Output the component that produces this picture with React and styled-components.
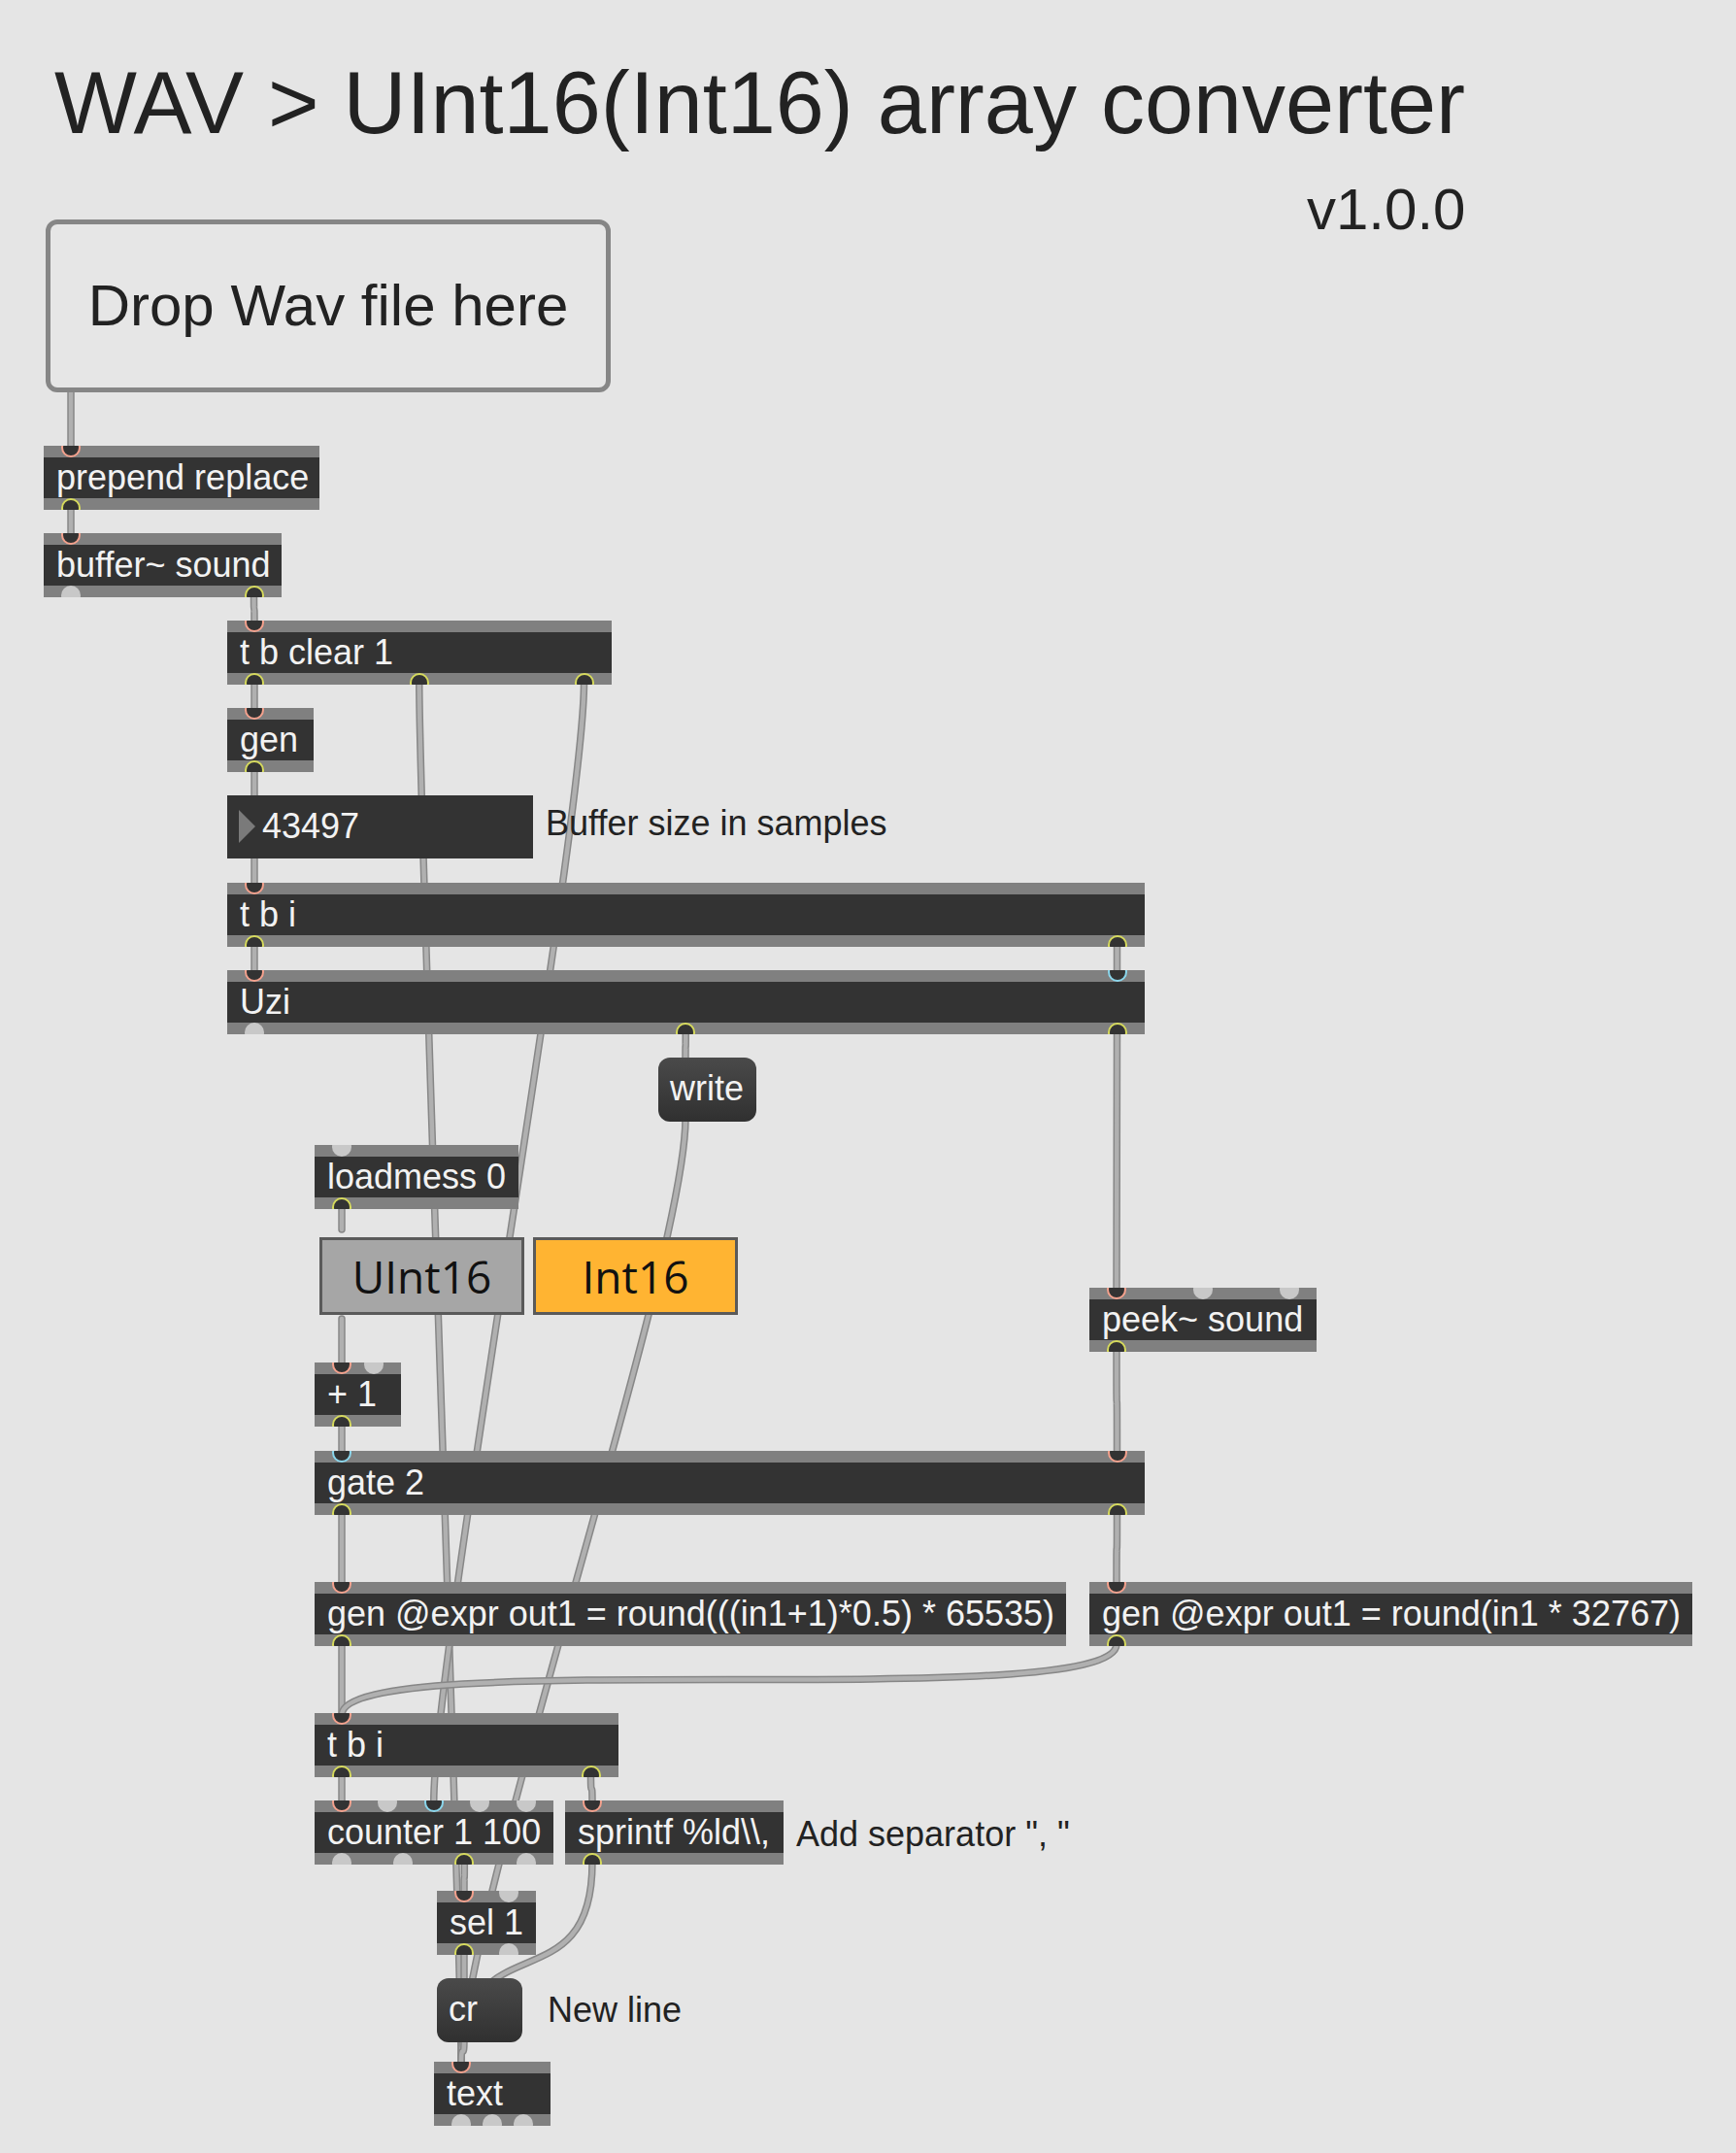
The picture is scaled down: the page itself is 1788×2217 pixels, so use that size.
import React from 'react'
import styled, { createGlobalStyle } from 'styled-components'

const GlobalStyle = createGlobalStyle`
  html, body {
    margin: 0;
    padding: 0;
    background: #e5e5e5;
  }
`

const RING = { hot: '#f4a18d', cold: '#8ad6ec', out: '#d6da5c' }

const portX = (w, n, i) => (n === 1 ? 28 : 28 + (i * (w - 56.5)) / (n - 1))

const objects = [
  { id: 'prepend', x: 45, y: 459, w: 284, text: 'prepend replace', ins: ['hot'], outs: ['out'] },
  { id: 'buffer', x: 45, y: 549, w: 245, text: 'buffer~ sound', ins: ['hot'], outs: ['none', 'out'] },
  { id: 'tbclear', x: 234, y: 639, w: 396, text: 't b clear 1', ins: ['hot'], outs: ['out', 'out', 'out'] },
  { id: 'gen', x: 234, y: 729, w: 89, text: 'gen', ins: ['hot'], outs: ['out'] },
  { id: 'tbi', x: 234, y: 909, w: 945, text: 't b i', ins: ['hot'], outs: ['out', 'out'] },
  { id: 'uzi', x: 234, y: 999, w: 945, text: 'Uzi', ins: ['hot', 'cold'], outs: ['none', 'out', 'out'] },
  { id: 'loadmess', x: 324, y: 1179, w: 210, text: 'loadmess 0', ins: ['none'], outs: ['out'] },
  { id: 'peek', x: 1122, y: 1326, w: 234, text: 'peek~ sound', ins: ['hot', 'none', 'none'], outs: ['out'] },
  { id: 'plus', x: 324, y: 1403, w: 89, text: '+ 1', ins: ['hot', 'none'], outs: ['out'] },
  { id: 'gate', x: 324, y: 1494, w: 855, text: 'gate 2', ins: ['cold', 'hot'], outs: ['out', 'out'] },
  { id: 'gen1', x: 324, y: 1629, w: 774, text: 'gen @expr out1 = round(((in1+1)*0.5) * 65535)', ins: ['hot'], outs: ['out'] },
  { id: 'gen2', x: 1122, y: 1629, w: 621, text: 'gen @expr out1 = round(in1 * 32767)', ins: ['hot'], outs: ['out'] },
  { id: 'tbi2', x: 324, y: 1764, w: 313, text: 't b i', ins: ['hot'], outs: ['out', 'out'] },
  { id: 'counter', x: 324, y: 1854, w: 246, text: 'counter 1 100', ins: ['hot', 'none', 'cold', 'none', 'none'], outs: ['none', 'none', 'out', 'none'] },
  { id: 'sprintf', x: 582, y: 1854, w: 225, text: 'sprintf %ld\\\\,', ins: ['hot'], outs: ['out'] },
  { id: 'sel', x: 450, y: 1947, w: 102, text: 'sel 1', ins: ['hot', 'none'], outs: ['out', 'none'] },
  { id: 'text', x: 447, y: 2123, w: 120, text: 'text', ins: ['hot'], outs: ['none', 'none', 'none'] },
]

const byId = Object.fromEntries(objects.map((o) => [o.id, o]))
const outlet = (id, i) => {
  const o = byId[id]
  return [o.x + portX(o.w, o.outs.length, i), o.y + 64]
}
const inlet = (id, i) => {
  const o = byId[id]
  return [o.x + portX(o.w, o.ins.length, i), o.y + 2]
}

const cords = [
  [[73, 404], inlet('prepend', 0)],
  [outlet('prepend', 0), inlet('buffer', 0)],
  [outlet('buffer', 1), inlet('tbclear', 0)],
  [outlet('tbclear', 0), inlet('gen', 0)],
  [outlet('tbclear', 1), inlet('text', 0)],
  [outlet('tbclear', 2), inlet('counter', 2)],
  [outlet('gen', 0), [262, 822]],
  [[262, 882], inlet('tbi', 0)],
  [outlet('tbi', 0), inlet('uzi', 0)],
  [outlet('tbi', 1), inlet('uzi', 1)],
  [outlet('uzi', 1), [706, 1092]],
  [outlet('uzi', 2), inlet('peek', 0)],
  [[706, 1152], inlet('text', 0)],
  [outlet('loadmess', 0), [352, 1266]],
  [[352, 1358], inlet('plus', 0)],
  [outlet('plus', 0), inlet('gate', 0)],
  [outlet('peek', 0), inlet('gate', 1)],
  [outlet('gate', 0), inlet('gen1', 0)],
  [outlet('gate', 1), inlet('gen2', 0)],
  [outlet('gen1', 0), inlet('tbi2', 0)],
  [outlet('gen2', 0), inlet('tbi2', 0)],
  [outlet('tbi2', 0), inlet('counter', 0)],
  [outlet('tbi2', 1), inlet('sprintf', 0)],
  [outlet('counter', 2), inlet('sel', 0)],
  [outlet('sel', 0), [478, 2040]],
  [outlet('sprintf', 0), inlet('text', 0)],
  [[478, 2100], inlet('text', 0)],
]

const cordPath = ([x1, y1], [x2, y2]) => {
  const k = Math.min(Math.abs(y2 - y1), 150)
  return `M ${x1} ${y1} C ${x1} ${y1 + k}, ${x2} ${y2 - k}, ${x2} ${y2}`
}

function Patcher() {
  return (
    <Canvas>
      <CordLayer width="1788" height="2217" viewBox="0 0 1788 2217">
        {cords.map(([a, b], i) => (
          <g key={i} fill="none" strokeLinecap="round">
            <path d={cordPath(a, b)} stroke="#878787" strokeWidth="7.5" />
            <path d={cordPath(a, b)} stroke="#b0b0b0" strokeWidth="4.5" />
          </g>
        ))}
      </CordLayer>

      <Title>WAV &gt; UInt16(Int16) array converter</Title>
      <Version>v1.0.0</Version>

      <DropZone>Drop Wav file here</DropZone>

      {objects.map((o) => (
        <ObjBox key={o.id} $x={o.x} $y={o.y} $w={o.w}>
          <Bar />
          <Body>{o.text}</Body>
          <Bar />
          {o.ins.map((k, i) => (
            <Port key={'i' + i} $top $kind={k} $x={portX(o.w, o.ins.length, i)} />
          ))}
          {o.outs.map((k, i) => (
            <Port key={'o' + i} $kind={k} $x={portX(o.w, o.outs.length, i)} />
          ))}
        </ObjBox>
      ))}

      <NumberBox>
        <Arrow />
        43497
      </NumberBox>
      <Comment $x={562} $y={830}>Buffer size in samples</Comment>

      <Message $x={678} $y={1089} $w={101}>write</Message>
      <Message $x={450} $y={2037} $w={88}>cr</Message>

      <Tab $x={329} $bg="#a6a6a6">UInt16</Tab>
      <Tab $x={549} $bg="#ffb432">Int16</Tab>

      <Comment $x={820} $y={1871}>Add separator ", "</Comment>
      <Comment $x={564} $y={2052}>New line</Comment>
    </Canvas>
  )
}

export default function App() {
  return (
    <>
      <GlobalStyle />
      <Patcher />
    </>
  )
}

const Canvas = styled.div`
  position: relative;
  width: 1788px;
  height: 2217px;
  overflow: hidden;
  background: #e5e5e5;
  font-family: "Liberation Sans", Arial, sans-serif;
`

const CordLayer = styled.svg`
  position: absolute;
  left: 0;
  top: 0;
`

const Title = styled.div`
  position: absolute;
  left: 56px;
  top: 61px;
  font-size: 90px;
  line-height: 90px;
  color: #222;
  white-space: nowrap;
`

const Version = styled.div`
  position: absolute;
  left: 1346px;
  top: 186px;
  font-size: 60px;
  line-height: 60px;
  color: #222;
`

const DropZone = styled.div`
  position: absolute;
  left: 47px;
  top: 226px;
  width: 582px;
  height: 178px;
  box-sizing: border-box;
  border: 5px solid #868686;
  border-radius: 12px;
  background: #e6e6e6;
  display: flex;
  align-items: center;
  justify-content: center;
  font-size: 60px;
  line-height: 60px;
  color: #222;
`

const ObjBox = styled.div`
  position: absolute;
  left: ${(p) => p.$x}px;
  top: ${(p) => p.$y}px;
  width: ${(p) => p.$w}px;
  height: 66px;
  overflow: hidden;
  display: flex;
  flex-direction: column;
`

const Bar = styled.div`
  flex: none;
  height: 12px;
  background: #808080;
`

const Body = styled.div`
  flex: 1;
  background: #333333;
  color: #f2f2f2;
  font-size: 36px;
  line-height: 41px;
  padding-left: 13px;
  white-space: nowrap;
`

const Port = styled.span`
  position: absolute;
  left: ${(p) => p.$x - 10}px;
  ${(p) => (p.$top ? 'top: -8px;' : 'bottom: -8px;')}
  width: 20px;
  height: 20px;
  box-sizing: border-box;
  border-radius: 50%;
  background: ${(p) => (p.$kind === 'none' ? '#c8c8c8' : '#333333')};
  border: ${(p) => (p.$kind === 'none' ? 'none' : `2.5px solid ${RING[p.$kind]}`)};
`

const NumberBox = styled.div`
  position: absolute;
  left: 234px;
  top: 819px;
  width: 315px;
  height: 65px;
  background: #333333;
  color: #f2f2f2;
  font-size: 36px;
  line-height: 63px;
  padding-left: 36px;
  box-sizing: border-box;
`

const Arrow = styled.span`
  position: absolute;
  left: 12px;
  top: 15px;
  width: 0;
  height: 0;
  border-top: 17.5px solid transparent;
  border-bottom: 17.5px solid transparent;
  border-left: 17px solid #7a7a7a;
`

const Message = styled.div`
  position: absolute;
  left: ${(p) => p.$x}px;
  top: ${(p) => p.$y}px;
  width: ${(p) => p.$w}px;
  height: 66px;
  box-sizing: border-box;
  padding-left: 12px;
  border-radius: 12px;
  background: linear-gradient(#4a4a4a, #303030);
  color: #f2f2f2;
  font-size: 36px;
  line-height: 64px;
`

const Tab = styled.div`
  position: absolute;
  left: ${(p) => p.$x}px;
  top: 1274px;
  width: 211px;
  height: 80px;
  box-sizing: border-box;
  border: 3px solid #5a5a5a;
  background: ${(p) => p.$bg};
  display: flex;
  align-items: center;
  justify-content: center;
  font-family: "Open Sans", sans-serif;
  font-size: 46px;
  line-height: 74px;
  color: #111;
`

const Comment = styled.div`
  position: absolute;
  left: ${(p) => p.$x}px;
  top: ${(p) => p.$y}px;
  font-size: 36px;
  line-height: 36px;
  color: #222;
  white-space: nowrap;
`
